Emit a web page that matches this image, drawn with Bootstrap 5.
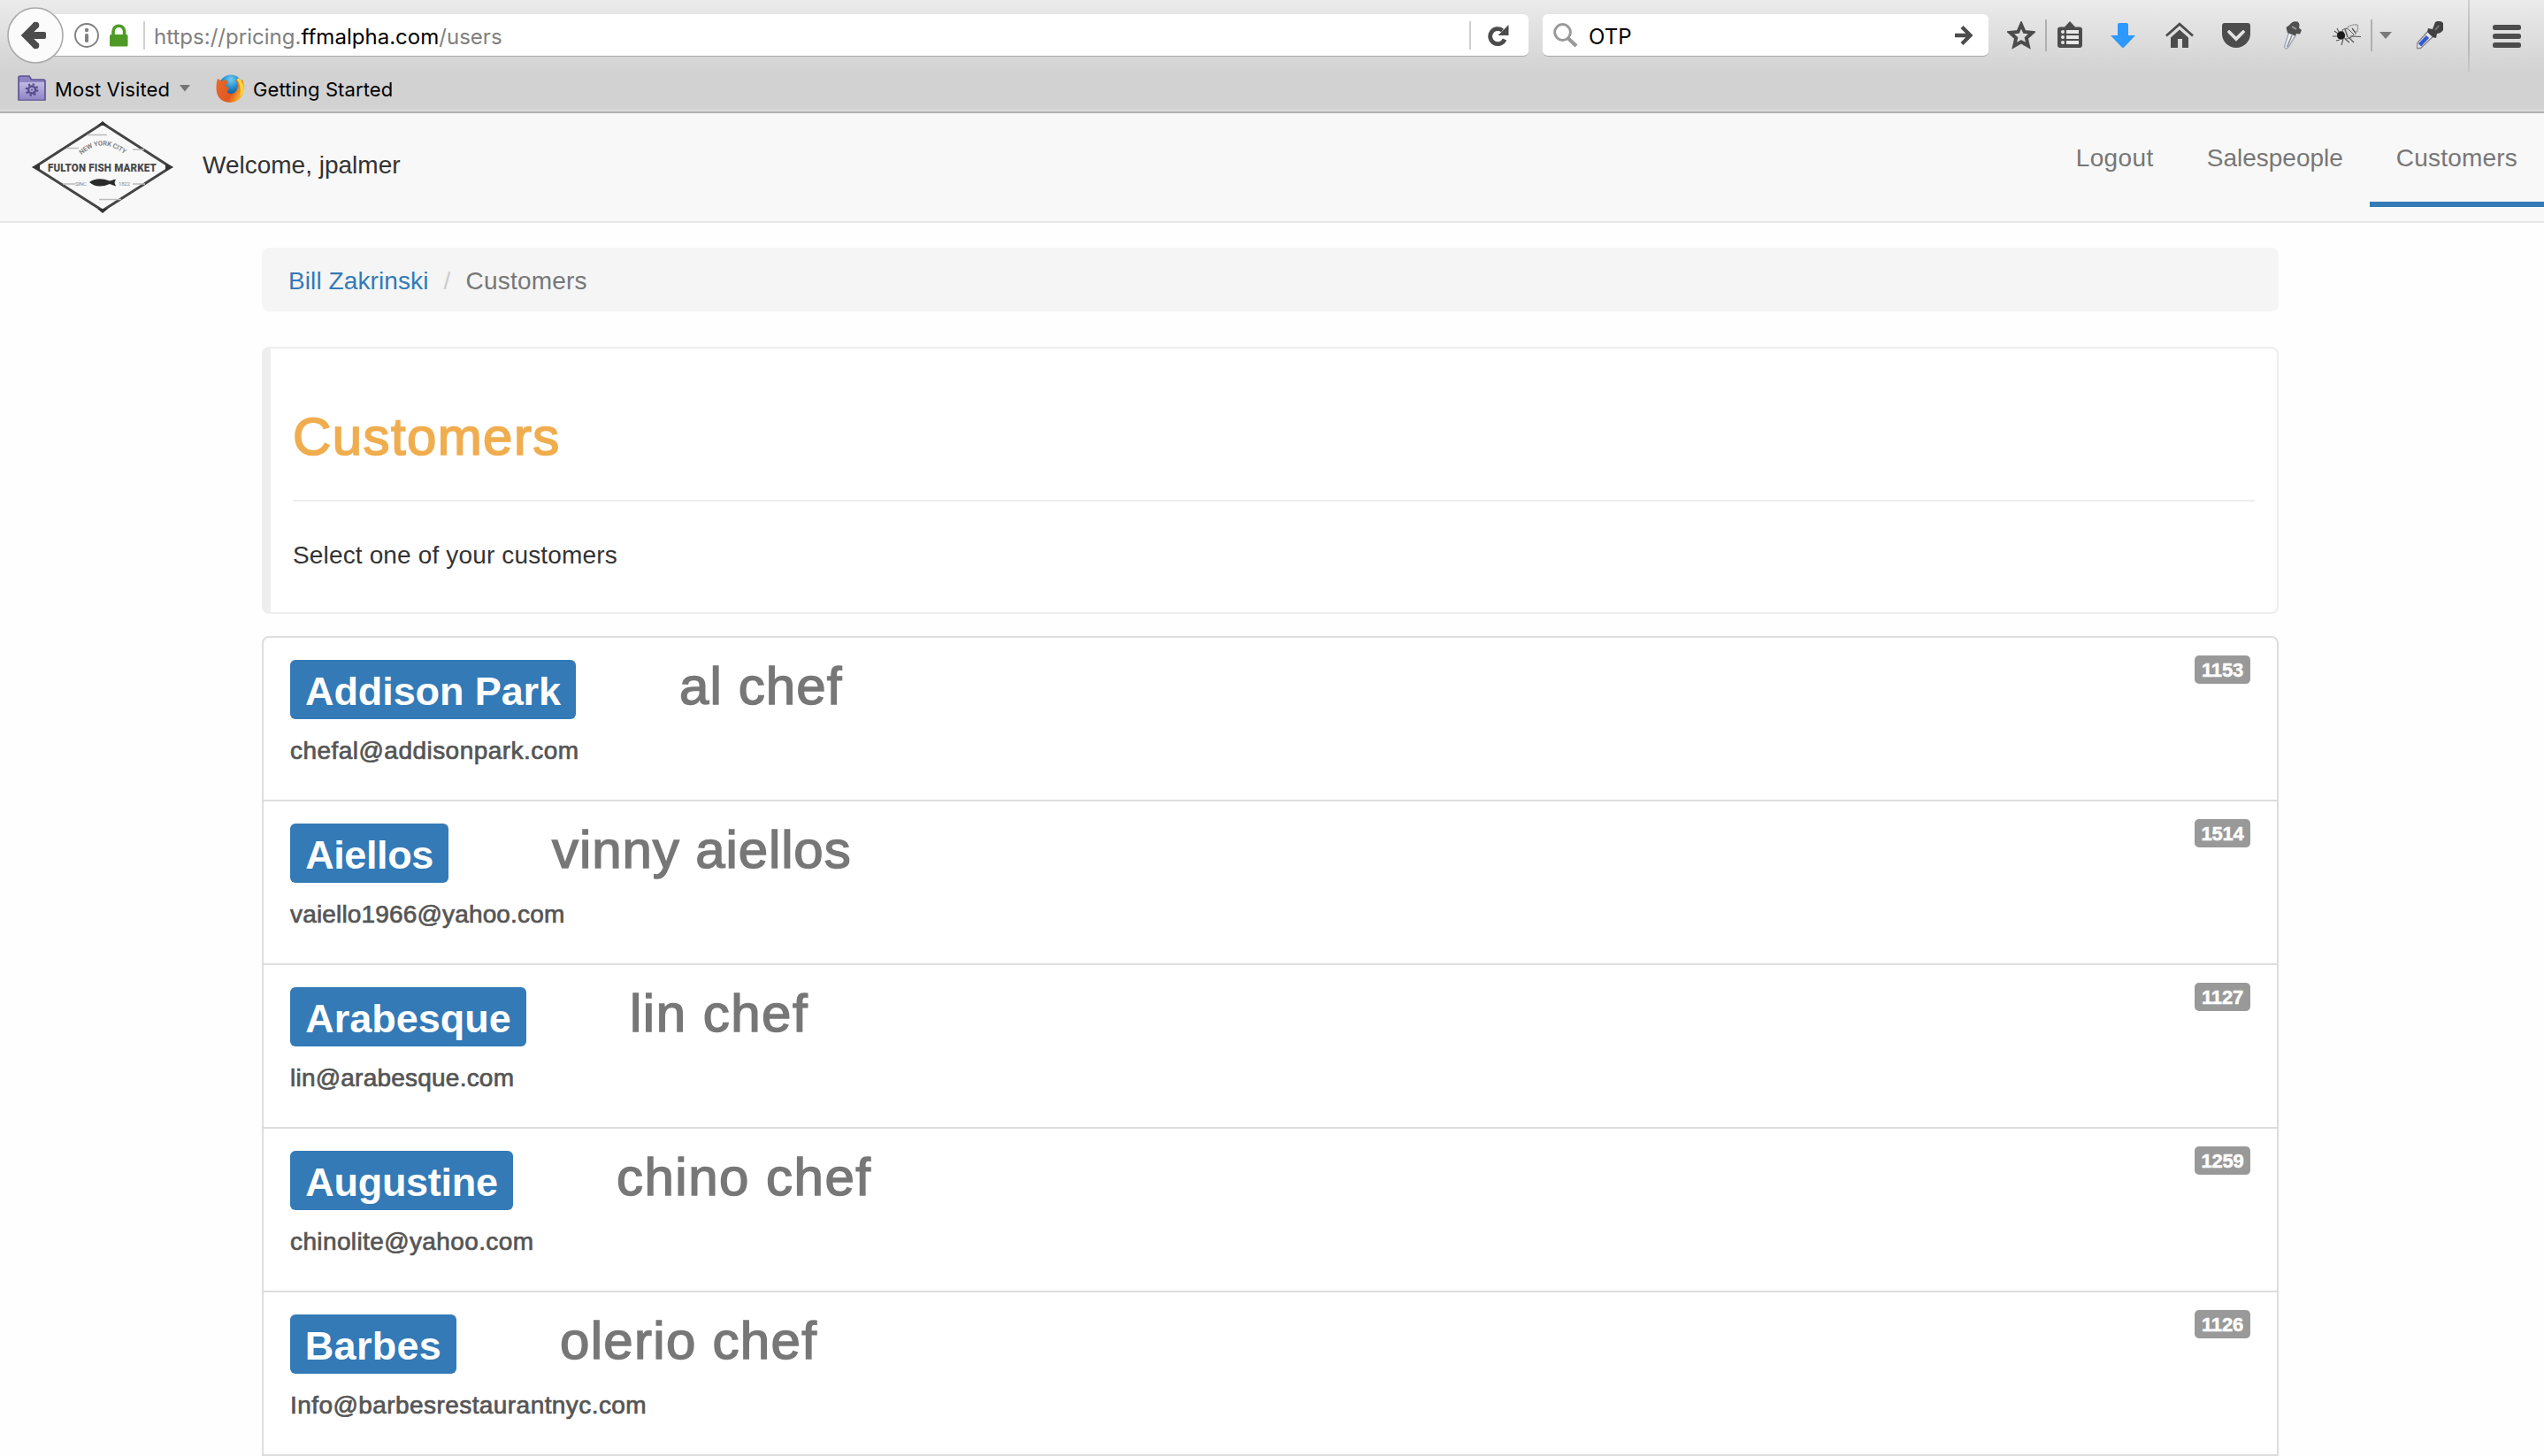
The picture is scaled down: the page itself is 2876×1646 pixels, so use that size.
<!DOCTYPE html>
<html lang="en">
<head>
<meta charset="utf-8">
<title>Customers</title>
<link href="https://cdn.jsdelivr.net/npm/bootstrap@5.3.0/dist/css/bootstrap.min.css" rel="stylesheet">
<style>
body{font-family:"Liberation Sans",Arial,sans-serif;font-size:28px;line-height:40px;letter-spacing:.2px;color:#333;background:#fefefe;overflow:hidden}
svg{display:block;flex:none}
/* browser chrome */
.chrome{height:128px;font-family:Inter,sans-serif;letter-spacing:0;color:#000;background:linear-gradient(#ebebeb,#d2d2d2 82px);border-bottom:2px solid #b1b1b1;box-shadow:inset 0 -2px #dadada}
.toolbar{height:80px}
.backbtn{width:64px;height:64px;margin-left:8px;z-index:2}
.field{height:48px;background:#fff;border-bottom:1px solid #a9a9a9;font-size:24px;line-height:44px}
.field .txt{padding-top:4px}
.urlbar{width:1678px;margin-left:-22px;padding-left:34px;border-radius:0 6px 6px 0;color:#808080}
.urlbar .txt{padding-left:10px;letter-spacing:.02px}
.urlbar b{font-weight:400;color:#000}
.lock{margin-left:10px}
.searchbar{width:504px;margin-left:16px;border-radius:6px;color:#000;padding:0 17px 0 12px}
.vline{width:2px;height:32px;background:#d0d0d0;flex:none}
.vline.tall{height:36px;background:#b0b0b0;margin-left:11px}
.vline.full{height:82px;align-self:flex-start;background:linear-gradient(#d0d0d0,#b8b8b8 60%,#c8c8c8);margin-left:27px}
.lock + .vline{margin-left:15px}
.reload{margin:0 22px 0 19px}
.gap-xs{margin-left:8px}
.gap-s{margin-left:10px}
.gap-m{margin-left:21px}
.gap-l{margin-left:28px}
.gap-xl{margin-left:32px}
.bookmarks{height:40px;font-size:22px;line-height:32px;padding-left:20px}
.bookmarks span{padding-top:1px;letter-spacing:.1px}
/* site header */
.sitebar{height:124px;background:#f8f8f8;border-bottom:2px solid #e7e7e7}
.brand{margin-left:36px;overflow:visible}
.hello{letter-spacing:0;padding-left:33px;margin-top:-5px;line-height:40px}
.topnav .nav-link{height:106px;padding:31px 30px 0;line-height:40px;color:#777;border-bottom:6px solid transparent}
.topnav .nav-link.active{border-bottom-color:#337ab7}
.topnav .wide{letter-spacing:.4px}
.topnav .snug{letter-spacing:0}
/* content */
.page{width:2280px;margin-left:296px;padding-top:28px}
.crumbs{height:72px;background:#f5f5f5;border-radius:8px;padding:18px 0 0 30px;margin-bottom:40px;--bs-breadcrumb-divider-color:#ccc;--bs-breadcrumb-item-padding-x:17px;--bs-breadcrumb-item-active-color:#777;--bs-breadcrumb-font-size:28px}
.crumbs a{color:#337ab7;letter-spacing:.1px}
.callout{height:302px;border:2px solid #eee;border-left-width:10px;border-radius:8px;padding:67px 25px 0 25px;margin-bottom:25px;background:#fff}
.callout h1{font-size:60px;line-height:66px;font-weight:400;color:#f0ad4e;letter-spacing:1.4px;-webkit-text-stroke:1.7px #f0ad4e;margin:0 0 38px}
.callout hr{border-top:2px solid #eee;opacity:1;margin:0 0 41px}
.callout p{letter-spacing:.15px}
.clients{border-radius:8px 8px 0 0;--bs-list-group-border-color:#ddd;--bs-list-group-border-width:2px;--bs-list-group-border-radius:8px}
.clients .list-group-item{height:185px;padding:20px 30px 0;color:#555;background:#fff}
.clients .list-group-item:first-child{height:187px}
.clients .list-group-item:last-child{border-radius:0}
.clients .list-group-item + .list-group-item{border-top-width:0}
.client{padding-top:5px}
.tag{width:var(--w);height:67px;padding-top:4px;background:#337ab7;color:#fff;border-radius:6px;font-weight:700;font-size:45px;line-height:63px;text-align:center;letter-spacing:var(--t)}
.person{margin-left:117px;font-size:60px;line-height:60px;color:#777;letter-spacing:var(--n);-webkit-text-stroke:1.5px #777}
.mail{margin-top:16px;letter-spacing:var(--m);-webkit-text-stroke:.7px #555}
.idnum{width:63px;height:32px;padding:1px 0 0;border-radius:5px;background:#999;font-size:22px;line-height:32px;letter-spacing:-.2px;-webkit-text-stroke:.5px #fff}
.clients li:nth-child(1){--w:323px;--t:-.1px;--n:1.1px;--m:.46px}
.clients li:nth-child(2){--w:179px;--t:-.4px;--n:.9px;--m:.16px}
.clients li:nth-child(3){--w:267px;--t:0px;--n:1.5px;--m:.22px}
.clients li:nth-child(4){--w:252px;--t:-.3px;--n:1.5px;--m:.38px}
.clients li:nth-child(5){--w:188px;--t:.3px;--n:1.3px;--m:.43px}
</style>
<script src="https://cdn.jsdelivr.net/npm/bootstrap@5.3.0/dist/js/bootstrap.bundle.min.js"></script>
</head>
<body>
<header class="chrome">
  <div class="toolbar d-flex align-items-center">
    <svg class="backbtn position-relative" viewBox="0 0 64 64"><circle cx="32" cy="32" r="31" fill="#fbfbfb" stroke="#a9a9a9" stroke-width="1.6"/><path d="M33.500 19.500 21 32l12.500 12.500M22 32h19.500" fill="none" stroke="#4c4c4c" stroke-width="7.500"/><circle cx="32.500" cy="20.500" r="3.800" fill="#4c4c4c"/><circle cx="32.500" cy="43.500" r="3.800" fill="#4c4c4c"/><rect x="30" y="28" width="14" height="8" rx="2" fill="#4c4c4c"/></svg>
    <div class="field urlbar d-flex align-items-center">
      <svg width="28" height="28" viewBox="0 0 28 28"><circle cx="14" cy="14" r="13" fill="none" stroke="#808080" stroke-width="1.900"/><circle cx="14" cy="8" r="2.200" fill="#808080"/><rect x="12" y="12" width="4" height="10" rx="1.800" fill="#808080"/></svg>
      <svg class="lock" width="25" height="28" viewBox="0 0 25 28"><path d="M6 14V9.500a6.300 6.300 0 0 1 12.600 0V14" fill="none" stroke="#4f9a26" stroke-width="3.600"/><rect x="2" y="13" width="20.500" height="13.500" rx="1.500" fill="#4f9a26"/></svg>
      <div class="vline"></div>
      <div class="txt">https://pricing.<b>ffmalpha.com</b>/users</div>
      <div class="vline ms-auto"></div>
      <svg class="reload" width="24" height="26" viewBox="0 0 24 26"><path d="M19 17.500a8.500 8.500 0 1 1-2.500-10" fill="none" stroke="#4c4c4c" stroke-width="4.800"/><path d="M23.500 1v12H11.500z" fill="#4c4c4c"/></svg>
    </div>
    <div class="field searchbar d-flex align-items-center">
      <svg width="28" height="28" viewBox="0 0 28 28"><circle cx="10.500" cy="10.500" r="8.900" fill="none" stroke="#999" stroke-width="3"/><path d="M16.500 17 26 26" stroke="#999" stroke-width="4.200"/></svg>
      <div class="txt ms-2 ps-1">OTP</div>
      <svg class="ms-auto" width="22" height="24" viewBox="0 0 22 24"><path d="M1 12h17M9 2.500 18.500 12 9 21.500" fill="none" stroke="#4c4c4c" stroke-width="4.300"/></svg>
    </div>
    <svg class="gap-m" width="32" height="32" viewBox="0 0 32 32"><path d="M16 3.800 19.600 12l8.900.9-6.700 6 2 8.900L16 23.300l-7.800 4.500 2-8.900-6.700-6 8.900-.9z" fill="none" stroke="#4c4c4c" stroke-width="4"/></svg>
    <div class="vline tall"></div>
    <svg class="gap-s" width="32" height="32" viewBox="0 0 32 32"><path d="M16 0l6 6.500h5a3 3 0 0 1 3 3V27a3 3 0 0 1-3 3H5a3 3 0 0 1-3-3V9.500a3 3 0 0 1 3-3h5z" fill="#4c4c4c"/><g fill="#e8e8e8"><rect x="12" y="10" width="14" height="4"/><rect x="12" y="16" width="14" height="4"/><rect x="12" y="22" width="14" height="4"/><circle cx="8" cy="12" r="2"/><circle cx="8" cy="18" r="2"/><circle cx="8" cy="24" r="2"/></g></svg>
    <svg class="gap-l" width="32" height="32" viewBox="0 0 32 32"><path d="M12 2h8a2 2 0 0 1 2 2v12h8L17.500 29.300q-1.500 1.400-3 0L2 16h8V4a2 2 0 0 1 2-2z" fill="#2d98fd"/></svg>
    <svg class="gap-xl" width="32" height="32" viewBox="0 0 32 32"><path d="M1 16.500 16 3.200l15 13.300" fill="none" stroke="#4c4c4c" stroke-width="2.800"/><path d="M6 18.500 16 9.500l10 9V30h-7V20h-5v10H6z" fill="#4c4c4c"/></svg>
    <svg class="gap-xl" width="32" height="32" viewBox="0 0 32 32"><path d="M3 2h26a3 3 0 0 1 3 3v9a16 16 0 0 1-32 0V5a3 3 0 0 1 3-3z" fill="#4c4c4c"/><path d="m8 12 8 8 8-8" fill="none" stroke="#e3e3e3" stroke-width="3.800" stroke-linecap="round"/></svg>
    <svg class="gap-xl" width="32" height="34" viewBox="0 0 32 34"><path d="M11.500 14 6.500 30q1.500 4 5-.5L19 17z" fill="#f3f4f6" stroke="#9eabba" stroke-width="1.500"/><path d="M15 17 9.500 30" stroke="#888" stroke-width="1.500"/><path d="M12.500 5q3-5 9-3.500 3 2 1.500 7l3 2.500-2 4.500-4-.5-1 2.500-9-3.500-1.500-6z" fill="#505050"/><path d="M15 7l5 3" stroke="#999" stroke-width="2"/></svg>
    <svg class="gap-l" width="33" height="26" viewBox="-1 0 33 26"><path d="M15 6q5-6 13-5 2 5-2 10l-8 4z" fill="#dedede" stroke="#777" stroke-width="1.200" stroke-dasharray="2 1"/><path d="M11 7q4-4 9 1l4 4q-3 5-10 5z" fill="#d8d8d8" stroke="#666"/><path d="M14 6l3 9M22 5l4 5" stroke="#555" stroke-width="1.300"/><ellipse cx="9.500" cy="13" rx="4.600" ry="4.700" fill="#1c1c1c"/><path d="M6 11 2 8M6 14H0M8 18l-4 1M12 17l-2 7M14 17l5 4M18 15l6 6M20 14l12 .5M7 9 5 5" fill="none" stroke="#555" stroke-width="1.100"/></svg>
    <div class="vline tall"></div>
    <svg class="gap-xs" width="14" height="8" viewBox="0 0 14 8"><path d="M0 0h14L7 8z" fill="#7a7a7a"/></svg>
    <svg class="gap-l" width="31" height="32" viewBox="1 0 31 32"><path d="M15 10 1.500 25v5.500h4L21 16z" fill="#e6e8ee" stroke="#858585" stroke-width="1.400"/><path d="M13.500 17.500 4.500 27" stroke="#3558d0" stroke-width="4.500"/><path d="M14 8l5 1 3-8q5-3 9 1v8q-3 4-7 4l-1 5-4-1-6-6z" fill="#414141"/><path d="M22 10l4-5" stroke="#777" stroke-width="2"/></svg>
    <div class="vline full"></div>
    <svg class="ms-auto me-4" width="34" height="32" viewBox="0 0 34 32" fill="#4c4c4c"><rect y="4" width="32" height="6" rx="2.500"/><rect y="14" width="32" height="6" rx="2.500"/><rect y="24" width="32" height="6" rx="2.500"/></svg>
  </div>
  <div class="bookmarks d-flex align-items-center">
    <svg width="32" height="30" viewBox="0 0 32 30"><defs><linearGradient id="fold" x2="0" y2="1"><stop stop-color="#c0b9e3"/><stop offset="1" stop-color="#9086c6"/></linearGradient></defs><path d="M1 28V3q0-2 2-2h10l2.500 4H29q2 0 2 2v21z" fill="#8e84c2" stroke="#5b5290" stroke-width="1.600"/><rect x="2" y="8" width="28" height="19.500" fill="url(#fold)"/><circle cx="16" cy="16.500" r="4" fill="none" stroke="#574f8b" stroke-width="2.500"/><circle cx="16" cy="16.500" r="6.200" fill="none" stroke="#574f8b" stroke-width="2.400" stroke-dasharray="2.200 2.670"/><circle cx="16" cy="16.500" r="1" fill="#574f8b"/></svg>
    <span class="gap-s">Most Visited</span>
    <svg class="ms-2 me-3" width="18" height="8" viewBox="-3 0 18 8"><path d="M0 0h12L6 7.500z" fill="#747474"/></svg>
    <svg class="gap-s" width="32" height="32" viewBox="0 0 32 32"><defs><radialGradient id="globe" cx=".5" cy=".2" r=".8"><stop stop-color="#6fd0f5"/><stop offset=".5" stop-color="#1f82c4"/><stop offset="1" stop-color="#0c3b80"/></radialGradient><linearGradient id="fur" x1="0" y1=".2" x2="1" y2=".6"><stop stop-color="#e8692a"/><stop offset=".6" stop-color="#e2571f"/><stop offset="1" stop-color="#f7c52c"/></linearGradient></defs><circle cx="17" cy="14" r="13.500" fill="url(#globe)"/><path d="M2 5q2 0 4 3 4-3 8 0-1 3-4 5 3 0 5 3-3 3-1 5 5 3 9-2 4-7-1-13 9 3 8-1 3 8 1.500 14Q29 31 16 32 1 31 .5 16 .5 9 2 5z" fill="url(#fur)"/><path d="M26 4q6 6 5.500 14-1 5-4 7 2-12-4-19z" fill="#fbd43c"/></svg>
    <span class="gap-s">Getting Started</span>
  </div>
</header>

<nav class="sitebar d-flex">
  <div class="d-flex align-items-center">
    <svg class="brand" width="160" height="104" viewBox="0 0 160 104" font-family="Roboto,sans-serif" fill="#4a4a4a"><path d="M80 2.500 157 52 80 101 3 52z" fill="none" stroke="#444" stroke-width="3"/><path d="M0 52l9-4v8zM160 52l-9-4v8zM80 0l6 5H74zM80 104l6-5H74z" fill="#333"/><path d="M62 15.500h23M40 30.500h13M114 32h13M114 71h14M35 71h14M76 88.500h25" stroke="#bbb" stroke-width="1.500"/><defs><path id="arc" d="M56 38Q80 16 108 40"/></defs><text font-size="7.500" font-weight="700" fill="#858585"><textPath href="#arc" textLength="54">NEW YORK CITY</textPath></text><text x="18" y="56.500" font-size="13.500" font-weight="900" textLength="123" lengthAdjust="spacingAndGlyphs">FULTON FISH MARKET</text><text x="49" y="73" font-size="6" fill="#888" textLength="13">SINC</text><text x="98" y="73" font-size="6" fill="#888" textLength="13">1822</text><path d="M65 69q9-6.500 23-1.500l7-2-1.500 4 1.500 4-7-2.500q-14 6-23-2z" fill="#2b2b2b"/></svg>
    <span class="hello">Welcome, jpalmer</span>
  </div>
  <ul class="nav topnav ms-auto">
    <li class="nav-item"><a class="nav-link wide" href="#">Logout</a></li>
    <li class="nav-item"><a class="nav-link snug" href="#">Salespeople</a></li>
    <li class="nav-item"><a class="nav-link active" href="#">Customers</a></li>
  </ul>
</nav>

<main class="page">
  <ol class="breadcrumb crumbs">
    <li class="breadcrumb-item"><a class="text-decoration-none" href="#">Bill Zakrinski</a></li>
    <li class="breadcrumb-item active">Customers</li>
  </ol>
  <section class="callout">
    <h1>Customers</h1>
    <hr>
    <p class="mb-0">Select one of your customers</p>
  </section>
  <ul class="list-group clients">
    <li class="list-group-item d-flex justify-content-between align-items-start"><div class="client"><div class="d-flex align-items-start"><span class="tag">Addison Park</span><span class="person">al chef</span></div><div class="mail">chefal@addisonpark.com</div></div><span class="badge idnum">1153</span></li>
    <li class="list-group-item d-flex justify-content-between align-items-start"><div class="client"><div class="d-flex align-items-start"><span class="tag">Aiellos</span><span class="person">vinny aiellos</span></div><div class="mail">vaiello1966@yahoo.com</div></div><span class="badge idnum">1514</span></li>
    <li class="list-group-item d-flex justify-content-between align-items-start"><div class="client"><div class="d-flex align-items-start"><span class="tag">Arabesque</span><span class="person">lin chef</span></div><div class="mail">lin@arabesque.com</div></div><span class="badge idnum">1127</span></li>
    <li class="list-group-item d-flex justify-content-between align-items-start"><div class="client"><div class="d-flex align-items-start"><span class="tag">Augustine</span><span class="person">chino chef</span></div><div class="mail">chinolite@yahoo.com</div></div><span class="badge idnum">1259</span></li>
    <li class="list-group-item d-flex justify-content-between align-items-start"><div class="client"><div class="d-flex align-items-start"><span class="tag">Barbes</span><span class="person">olerio chef</span></div><div class="mail">Info@barbesrestaurantnyc.com</div></div><span class="badge idnum">1126</span></li>
  </ul>
</main>
</body>
</html>
